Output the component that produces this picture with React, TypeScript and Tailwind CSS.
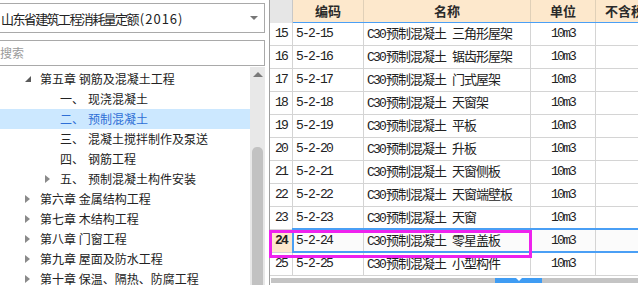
import React from 'react'

const cjk = "font-['Noto_Sans_CJK_SC','Noto_Sans',sans-serif]"
const mono = "font-['Liberation_Mono','Noto_Sans_CJK_SC',monospace] text-[13px] tracking-[-1.8px]"

const rows = [
  { n: 15, code: '5-2-15', name: '三角形屋架' },
  { n: 16, code: '5-2-16', name: '锯齿形屋架' },
  { n: 17, code: '5-2-17', name: '门式屋架' },
  { n: 18, code: '5-2-18', name: '天窗架' },
  { n: 19, code: '5-2-19', name: '平板' },
  { n: 20, code: '5-2-20', name: '升板' },
  { n: 21, code: '5-2-21', name: '天窗侧板' },
  { n: 22, code: '5-2-22', name: '天窗端壁板' },
  { n: 23, code: '5-2-23', name: '天窗' },
  { n: 24, code: '5-2-24', name: '零星盖板' },
  { n: 25, code: '5-2-25', name: '小型构件' },
]

const subItems = [
  { no: '一、', text: '现浇混凝土' },
  { no: '二、', text: '预制混凝土', selected: true },
  { no: '三、', text: '混凝土搅拌制作及泵送' },
  { no: '四、', text: '钢筋工程' },
  { no: '五、', text: '预制混凝土构件安装', collapsed: true },
]

const chapters = [
  '第六章 金属结构工程',
  '第七章 木结构工程',
  '第八章 门窗工程',
  '第九章 屋面及防水工程',
  '第十章 保温、隔热、防腐工程',
]

function Collapsed() {
  return <span className="inline-block w-0 h-0 border-y-[4px] border-y-transparent border-l-[5px] border-l-[#8a8a8a]" />
}

function Expanded() {
  return <span className="inline-block w-0 h-0 border-b-[6px] border-b-[#5a5a5a] border-l-[6px] border-l-transparent" />
}

export default function App() {
  return (
    <div className={`relative flex w-[638px] h-[285px] overflow-hidden bg-white text-[#222] ${cjk}`}>
      {/* Left: quota library tree */}
      <div className="w-[269px] shrink-0 flex flex-col pt-[3px]">
        <div className="w-[265px] h-[30px] border border-l-0 border-[#a9a9a9] flex items-center justify-between pr-[6px]">
          <span className="text-[13px] leading-none pl-px whitespace-nowrap">
            <span className="tracking-[-1.6px]">山东省建筑工程消耗量定额</span>
            <span className="ml-[2px] tracking-[1px]">(2016)</span>
          </span>
          <span className="w-0 h-0 border-x-[4px] border-x-transparent border-t-[4px] border-t-[#777]" />
        </div>
        <div className="mt-[7px] w-[265px] h-[26px] border border-l-0 border-[#a9a9a9] flex items-center">
          <span className="text-[12px] text-[#9a9a9a] leading-none">搜索</span>
        </div>
        <div className="mt-[1px] flex flex-1 min-h-0">
          <div className="w-[250px] pt-[2px] text-[12px]">
            <div className="h-[20px] flex items-center">
              <span className="w-[25px]" />
              <span className="w-[15px] flex"><Expanded /></span>
              <span>第五章 钢筋及混凝土工程</span>
            </div>
            {subItems.map((s) => (
              <div
                key={s.no}
                className={`h-[20px] flex items-center ${s.selected ? 'bg-[#cce8ff] text-[#2f6fd6]' : ''}`}
              >
                <span className="w-[45px]" />
                <span className="w-[15px] flex">{s.collapsed && <Collapsed />}</span>
                <span>{s.no}</span>
                <span className="ml-[4px]">{s.text}</span>
              </div>
            ))}
            {chapters.map((c) => (
              <div key={c} className="h-[20px] flex items-center">
                <span className="w-[25px]" />
                <span className="w-[15px] flex"><Collapsed /></span>
                <span>{c}</span>
              </div>
            ))}
          </div>
          <div className="w-[15px] bg-[#e8e8e8] flex flex-col items-center">
            <div className="h-[14px] flex items-center">
              <span className="w-0 h-0 border-x-[5px] border-x-transparent border-b-[5px] border-b-[#7a7a7a]" />
            </div>
            <div className="mt-[66px] w-[11px] flex-1 bg-[#c2c2c2] rounded-t-[5px]" />
          </div>
        </div>
      </div>

      {/* Right: quota grid */}
      <div className="flex-1 flex flex-col border-l border-[#a0a0a0]">
        <div className="h-[23px] flex text-[13px] font-bold text-[#2a2a2a]">
          <div className="w-[23px] shrink-0 bg-[#e6e6e6] border-r border-[#c8c8c8]" />
          <div className="flex flex-1 bg-[#fde8cc] border-b border-[#4a9ff5]">
            <div className="w-[71px] shrink-0 border-r border-[#e0d0b8] flex items-center justify-center">编码</div>
            <div className="w-[167px] shrink-0 border-r border-[#e0d0b8] flex items-center justify-center">名称</div>
            <div className="w-[65px] shrink-0 border-r border-[#e0d0b8] flex items-center justify-center">单位</div>
            <div className="flex-1 flex items-center pl-[9px] whitespace-nowrap">不含税</div>
          </div>
        </div>
        {rows.map((r) => {
          const sel = r.n === 24
          return (
            <div key={r.n} className={`relative h-[23px] flex text-[13px] border-b border-[#d4d4d4] ${sel ? 'bg-[#fbfbfb]' : ''}`}>
              <div className={`w-[23px] shrink-0 border-r border-[#d4d4d4] flex items-center justify-center ${mono} ${sel ? 'bg-[#fde8cc] font-bold' : ''}`}>
                {r.n}
              </div>
              <div className={`w-[71px] shrink-0 border-r border-[#d4d4d4] flex items-center pl-[3px] ${mono}`}>{r.code}</div>
              <div className="w-[167px] shrink-0 border-r border-[#d4d4d4] flex items-center pl-[3px] whitespace-nowrap">
                <span className="tracking-[-1px]">
                  <span className={mono}>C30</span>
                  <span className="ml-[1px]">预制混凝土</span>
                  <span className="ml-[6px]">{r.name}</span>
                </span>
              </div>
              <div className={`w-[65px] shrink-0 border-r border-[#d4d4d4] flex items-center justify-center ${mono}`}>10m3</div>
              <div className="flex-1" />
              {sel && (
                <div className="absolute left-[22px] right-0 -top-[2px] -bottom-px border-y-2 border-l-2 border-[#4a9ff5]" />
              )}
            </div>
          )
        })}
        <div className="mt-[2px] h-[5px] flex bg-[#c4c4c4] ml-px">
          <div className="w-[224px]" />
          <div className="w-[47px] bg-[#3f9cf3] flex justify-center items-start">
            <span className="w-0 h-0 border-x-[3px] border-x-transparent border-t-[3px] border-t-white" />
          </div>
        </div>
      </div>

      {/* highlight box */}
      <div className="absolute left-[269px] top-[230px] w-[263px] h-[28px] border-[3px] border-[#ee22ee]" />
    </div>
  )
}
